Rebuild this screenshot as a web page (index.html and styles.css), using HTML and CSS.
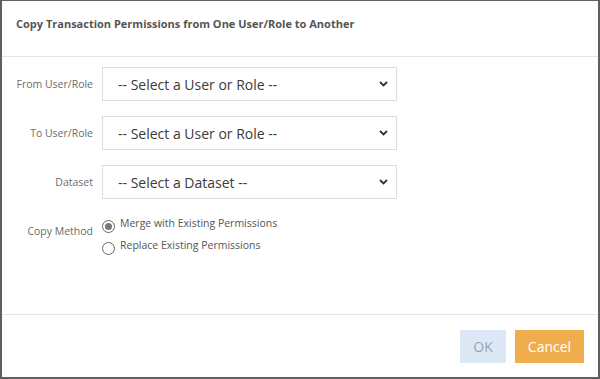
FILE: index.html
```html
<!DOCTYPE html>
<html lang="en">
<head>
  <meta charset="UTF-8">
  <meta name="viewport" content="width=device-width, initial-scale=1.0">
  <title>Copy Transaction Permissions</title>
  <link rel="stylesheet" href="styles.css">
</head>
<body>
    <div class="dialog">
        <div class="dialog-header">
            <h1 class="dialog-title">Copy Transaction Permissions from One User/Role to Another</h1>
        </div>

        <div class="dialog-body">
            <div class="form-row">
                <label class="form-label" for="fromUser">From User/Role</label>
                <div class="select-wrap">
                    <select id="fromUser" class="form-select">
                        <option>-- Select a User or Role --</option>
                    </select>
                    <svg class="select-arrow" width="9" height="6" viewBox="0 0 9 6"><path d="M1 1 L4.5 4.5 L8 1" fill="none" stroke="#333" stroke-width="1.8"/></svg>
                </div>
            </div>
            <div class="form-row">
                <label class="form-label" for="toUser">To User/Role</label>
                <div class="select-wrap">
                    <select id="toUser" class="form-select">
                        <option>-- Select a User or Role --</option>
                    </select>
                    <svg class="select-arrow" width="9" height="6" viewBox="0 0 9 6"><path d="M1 1 L4.5 4.5 L8 1" fill="none" stroke="#333" stroke-width="1.8"/></svg>
                </div>
            </div>
            <div class="form-row">
                <label class="form-label" for="dataset">Dataset</label>
                <div class="select-wrap">
                    <select id="dataset" class="form-select">
                        <option>-- Select a Dataset --</option>
                    </select>
                    <svg class="select-arrow" width="9" height="6" viewBox="0 0 9 6"><path d="M1 1 L4.5 4.5 L8 1" fill="none" stroke="#333" stroke-width="1.8"/></svg>
                </div>
            </div>
            <div class="form-row radio-row">
                <span class="form-label">Copy Method</span>
                <div class="radio-group">
                    <label class="radio-option">
                        <span class="radio checked"></span>
                        <span>Merge with Existing Permissions</span>
                    </label>
                    <label class="radio-option">
                        <span class="radio"></span>
                        <span>Replace Existing Permissions</span>
                    </label>
                </div>
            </div>
        </div>

        <div class="dialog-footer">
            <button class="btn btn-ok" disabled>OK</button>
            <button class="btn btn-cancel">Cancel</button>
        </div>
    </div>
</body>
</html>
```

FILE: styles.css
```css
body {
  margin: 0;
  background: #fff;
  font-family: "Open Sans", "Noto Sans", sans-serif;
}

.dialog {
  width: 600px;
  height: 379px;
  box-sizing: border-box;
  border-style: solid;
  border-color: #5f5f5f;
  border-width: 1px 2px 2px 2px;
  display: flex;
  flex-direction: column;
  background: #fff;
}

.dialog-header {
  height: 56px;
  border-bottom: 1px solid #e5e5e5;
  display: flex;
  align-items: center;
  padding: 0 14px;
  box-sizing: border-box;
}

.dialog-title {
  margin: 0;
  font-size: 11px;
  font-weight: bold;
  color: #555;
  margin-top: -10px;
}

.dialog-body {
  flex: 1;
  padding-top: 10px;
  display: flex;
  flex-direction: column;
  gap: 15px;
}

.form-row {
  display: flex;
  align-items: center;
  gap: 9px;
}

.form-label {
  width: 91px;
  text-align: right;
  font-size: 10.5px;
  color: #6b6b6b;
}

.select-wrap {
  position: relative;
  width: 295px;
}

.form-select {
  appearance: none;
  -webkit-appearance: none;
  width: 100%;
  height: 34px;
  border: 1px solid #ddd;
  border-radius: 0;
  background: #fff;
  padding: 0 12px 0 15px;
  font-family: "Open Sans", sans-serif;
  font-size: 14px;
  color: #3a3a3a;
  outline: none;
}

.select-arrow {
  position: absolute;
  right: 9px;
  top: 14px;
  pointer-events: none;
}

.radio-row {
  margin-top: 2px;
  align-items: flex-start;
}

.radio-row .form-label {
  margin-top: 8px;
}

.radio-group {
  display: flex;
  flex-direction: column;
  gap: 2px;
}

.radio-option {
  display: flex;
  align-items: flex-start;
  gap: 5px;
  font-size: 10.5px;
  color: #555;
  height: 20px;
}

.radio {
  width: 11px;
  height: 11px;
  border: 1px solid #666;
  border-radius: 50%;
  margin-top: 4px;
  position: relative;
  flex-shrink: 0;
}

.radio.checked::after {
  content: "";
  position: absolute;
  left: 2px;
  top: 2px;
  width: 7px;
  height: 7px;
  border-radius: 50%;
  background: #777;
}

.dialog-footer {
  height: 63px;
  border-top: 1px solid #e5e5e5;
  display: flex;
  justify-content: flex-end;
  align-items: flex-start;
  gap: 9px;
  padding: 15px 14px 0 0;
  box-sizing: border-box;
}

.btn {
  height: 33px;
  border: none;
  font-family: "Open Sans", sans-serif;
  font-size: 14px;
  padding: 0;
}

.btn-ok {
  width: 46px;
  background: #dce8f6;
  color: #9aa3ad;
}

.btn-cancel {
  width: 69px;
  background: #f0ad4e;
  color: #fff;
  cursor: pointer;
}
```
